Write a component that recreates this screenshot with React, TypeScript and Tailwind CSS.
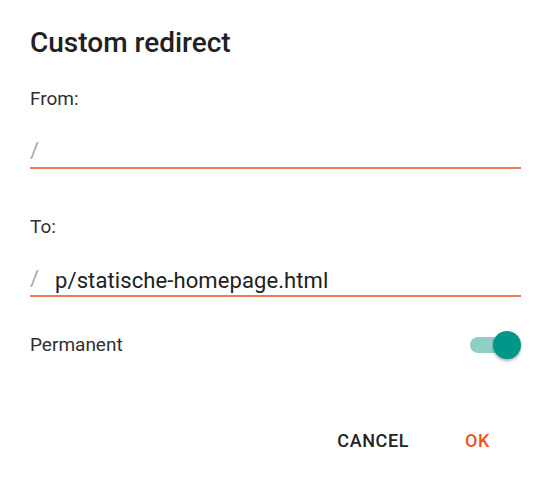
const font = { fontFamily: "Roboto, 'Noto Sans', sans-serif" };

function Field({ label, value }: { label: string; value?: string }) {
  return (
    <div className="flex flex-col">
      <div className="text-[19px] leading-[24px] text-[#303030]">{label}</div>
      <div className="mt-[28px] flex items-end border-b-2 border-[#f07a50]">
        <span className="w-[25px] text-[22px] leading-[28px] text-[#a8a8a8] -translate-y-[2px]">/</span>
        {value && (
          <span className="text-[22px] leading-[28px] tracking-[0.1px] text-[#212121]">{value}</span>
        )}
      </div>
    </div>
  );
}

export default function App() {
  return (
    <div
      className="w-[544px] h-[478px] bg-white pl-[30px] pr-[23px] flex flex-col"
      style={font}
    >
      <h1 className="pt-[27px] text-[28px] leading-[32px] font-medium text-[#212121]">
        Custom redirect
      </h1>

      <div className="mt-[28px]">
        <Field label="From:" />
      </div>

      <div className="mt-[46px]">
        <Field label="To:" value="p/statische-homepage.html" />
      </div>

      <div className="mt-[34px] h-[28px] flex items-center justify-between">
        <span className="text-[19px] leading-[24px] text-[#303030]">Permanent</span>
        <div className="relative w-[51px] h-[28px]">
          <div className="absolute left-0 top-[6px] w-[45px] h-[16px] rounded-full bg-[#8fcfc6]" />
          <div className="absolute right-0 top-0 w-[28px] h-[28px] rounded-full bg-[#009688] shadow-[0_2px_3px_rgba(0,0,0,0.3)]" />
        </div>
      </div>

      <div className="mt-[70px] flex justify-end gap-[56px] pr-[31px]">
        <button className="text-[18px] leading-[24px] font-medium tracking-[0.6px] text-[#232323]">
          CANCEL
        </button>
        <button className="text-[18px] leading-[24px] font-medium tracking-[0.6px] text-[#f4511e]">
          OK
        </button>
      </div>
    </div>
  );
}
